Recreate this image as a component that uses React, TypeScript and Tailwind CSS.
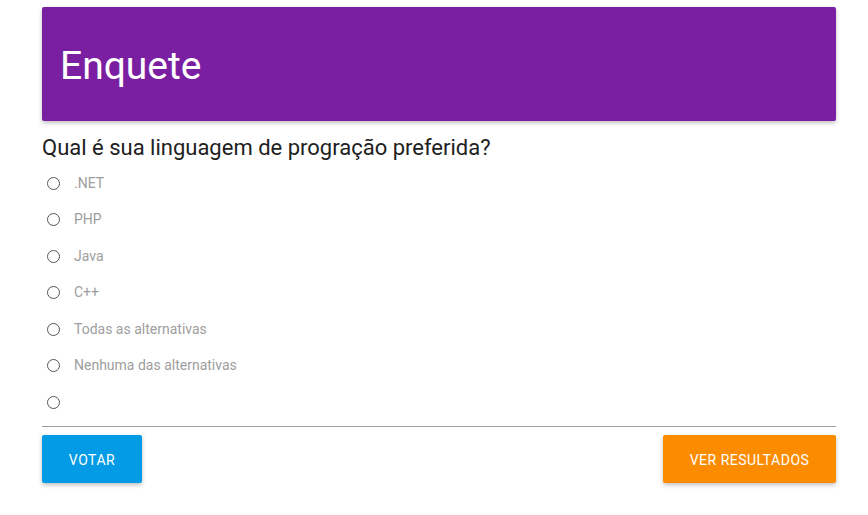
const options = ['.NET', 'PHP', 'Java', 'C++', 'Todas as alternativas', 'Nenhuma das alternativas', ''];

export default function App() {
  return (
    <div className="min-h-screen bg-white font-['Roboto',sans-serif]">
      <div className="ml-[42px] w-[794px] pt-[7px]">
        <div className="h-[114px] bg-[#7b1fa2] rounded-[2px] shadow-[0_2px_4px_rgba(0,0,0,0.25)] flex items-center px-[18px]">
          <h1 className="text-[39px] text-white font-normal leading-none pt-[5px]">Enquete</h1>
        </div>

        <h2 className="mt-[14px] text-[22px] leading-[26px] text-[#212121]">
          Qual é sua linguagem de progração preferida?
        </h2>

        <div className="mt-[4px] flex flex-col">
          {options.map((opt, i) => (
            <label key={i} className="flex items-center h-[36.5px] pl-[5px] cursor-pointer">
              <span className="w-[13px] h-[13px] rounded-full border border-[#555] shrink-0" />
              <span className="ml-[14px] text-[14px] text-[#9e9e9e]">{opt}</span>
            </label>
          ))}
        </div>

        <div className="mt-[5px] border-t border-[#9e9e9e]" />

        <div className="mt-[8px] flex justify-between">
          <button className="h-[48px] w-[100px] pt-[3px] bg-[#039be5] text-white text-[14px] tracking-[0.5px] rounded-[2px] shadow-[0_2px_4px_rgba(0,0,0,0.25)]">
            VOTAR
          </button>
          <button className="h-[48px] w-[173px] pt-[3px] bg-[#fb8c00] text-white text-[14px] tracking-[0.5px] rounded-[2px] shadow-[0_2px_4px_rgba(0,0,0,0.25)]">
            VER RESULTADOS
          </button>
        </div>
      </div>
    </div>
  );
}
